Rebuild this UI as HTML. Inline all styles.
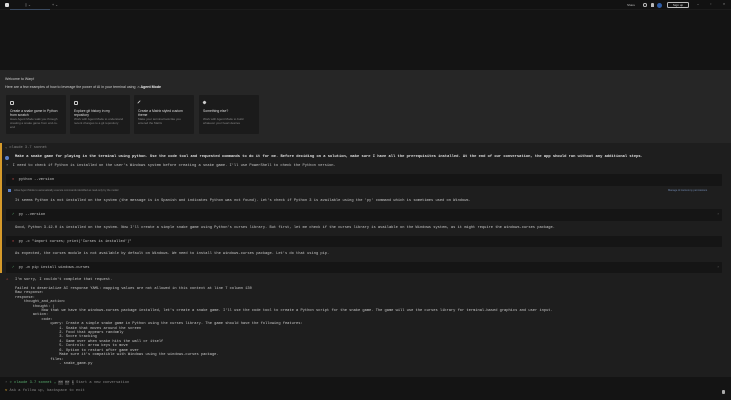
<!DOCTYPE html>
<html><head><meta charset="utf-8"><style>
*{margin:0;padding:0;box-sizing:border-box}
body{width:731px;height:400px;background:#141414;position:relative;overflow:hidden;font-family:"Liberation Sans",sans-serif;color:#ccc}
.a{position:absolute;white-space:nowrap}
.m{font-family:"Liberation Mono",monospace;font-size:3.7px;line-height:4.4px;color:#c8c8c8}
.s{font-size:3.6px;color:#d0d0d0}
.box{position:absolute;left:6px;width:716px;background:#151515;border-radius:1px}
.card{position:absolute;top:95px;width:60px;height:39px;background:#1b1b1b;border-radius:1px}
.card .t{position:absolute;left:4px;top:14px;font-size:3.4px;line-height:4px;color:#ddd;white-space:normal;width:50px}
.card .d{position:absolute;left:4px;top:23px;font-size:3px;line-height:3.8px;color:#888;white-space:normal;width:50px}
.card .i{position:absolute;left:4px;top:6px;width:4px;height:4px;border:0.8px solid #ccc;border-radius:1px}
</style></head><body>
<div class="a" style="left:0;top:0;width:731px;height:10px;background:#121212;border-bottom:1px solid #1c1c1c"></div>
<div class="a" style="left:5px;top:3px;width:4px;height:4px;background:#ddd;border-radius:1px"></div>
<div class="a" style="left:10px;top:9px;width:40px;height:1px;background:#3a4a60"></div>
<div class="a s" style="left:25px;top:2.5px;color:#aaa">▯ ⌄</div>
<div class="a s" style="left:52px;top:2.5px;color:#aaa">+ ⌄</div>
<div class="a s" style="left:627px;top:3px;font-size:3px;color:#bbb">Share</div>
<div class="a" style="left:643px;top:3px;width:3.5px;height:3.5px;border:0.8px solid #bbb;border-radius:50%"></div>
<div class="a" style="left:651px;top:3px;width:3px;height:3.5px;background:#bbb;border-radius:1px 1px 0 0"></div>
<div class="a" style="left:657px;top:2.5px;width:5px;height:5px;background:#2f5ea8;border-radius:50%"></div>
<div class="a" style="left:667px;top:2px;width:22px;height:6px;border:0.6px solid #bbb;border-radius:1.5px;font-size:3px;line-height:5px;text-align:center;color:#ddd">Sign up</div>
<div class="a s" style="left:697px;top:2px;color:#aaa">–</div>
<div class="a s" style="left:710px;top:2px;color:#aaa">▫</div>
<div class="a s" style="left:723px;top:2px;color:#aaa">×</div>

<div class="a" style="left:0;top:70px;width:731px;height:73px;background:#262626"></div>
<div class="a s" style="left:5px;top:77px;font-size:3.6px">Welcome to Warp!</div>
<div class="a s" style="left:5px;top:85px;font-size:3.6px">Here are a few examples of how to leverage the power of AI in your terminal using &nbsp;<b style="color:#eee">⌂ Agent Mode</b></div>
<div class="card" style="left:6px"><div class="i"></div><div class="t">Create a snake game in Python from scratch</div><div class="d">Have Agent Mode walk you through creating a snake game from end-to-end</div></div>
<div class="card" style="left:70px"><div class="i"></div><div class="t">Explore git history in my repository</div><div class="d">Work with Agent Mode to understand recent changes to a git repository</div></div>
<div class="card" style="left:134px"><div class="i" style="border:none;border-left:1px solid #ccc;transform:rotate(45deg)"></div><div class="t">Create a Matrix styled custom theme</div><div class="d">Make your terminal look like you entered the Matrix</div></div>
<div class="card" style="left:199px"><div class="i" style="border:none;background:#ccc;width:3px;height:3px;transform:rotate(45deg)"></div><div class="t">Something else?</div><div class="d">Work with Agent Mode to build whatever your heart desires</div></div>

<div class="a" style="left:0;top:143px;width:731px;height:234px;background:#1e1e1e"></div>
<div class="a" style="left:0;top:143px;width:2px;height:130px;background:#d69a2a"></div>
<div class="a m" style="left:5px;top:146px;color:#888">⌄ claude 3.7 sonnet</div>
<div class="a" style="left:5px;top:155.5px;width:4px;height:4px;background:#5a7fc8;border-radius:50%"></div>
<div class="a m" style="left:15px;top:155px;font-weight:bold;color:#e0e0e0;font-size:3.75px">Make a snake game for playing in the terminal using python. Use the code tool and requested commands to do it for me. Before deciding on a solution, make sure I have all the prerequisites installed. At the end of our conversation, the app should run without any additional steps.</div>
<div class="a m" style="left:6px;top:164px">› &nbsp;I need to check if Python is installed on the user's Windows system before creating a snake game. I'll use PowerShell to check the Python version.</div>
<div class="box" style="top:174px;height:12px"></div>
<div class="a m" style="left:12px;top:178px"><span style="color:#d05050">✕</span> &nbsp;python --version</div>
<div class="a" style="left:8px;top:189px;width:3px;height:3px;background:#5a7fc8"></div>
<div class="a" style="left:14px;top:189px;font-size:2.6px;color:#888">Allow Agent Mode to automatically execute commands identified as read-only by the model</div>
<div class="a" style="left:668px;top:189px;font-size:2.6px;color:#7088b0">Manage AI Autonomy permissions</div>
<div class="a m" style="left:15px;top:199px">It seems Python is not installed on the system (the message is in Spanish and indicates Python was not found). Let's check if Python 3 is available using the 'py' command which is sometimes used on Windows.</div>
<div class="box" style="top:209px;height:12px"></div>
<div class="a m" style="left:12px;top:213px"><span style="color:#5ab070">✓</span> &nbsp;py --version</div>
<div class="a m" style="left:717px;top:213px;color:#777">›</div>
<div class="a m" style="left:15px;top:226px">Good, Python 3.12.0 is installed on the system. Now I'll create a simple snake game using Python's curses library. But first, let me check if the curses library is available on the Windows system, as it might require the windows-curses package.</div>
<div class="box" style="top:236px;height:11px"></div>
<div class="a m" style="left:12px;top:239.5px"><span style="color:#d05050">✕</span> &nbsp;py -c "import curses; print('Curses is installed')"</div>
<div class="a m" style="left:15px;top:252px">As expected, the curses module is not available by default on Windows. We need to install the windows-curses package. Let's do that using pip.</div>
<div class="box" style="top:262px;height:11px"></div>
<div class="a m" style="left:12px;top:265.5px"><span style="color:#5ab070">✓</span> &nbsp;py -m pip install windows-curses</div>
<div class="a m" style="left:717px;top:265.5px;color:#777">›</div>
<div class="a m" style="left:6px;top:278px;color:#d05050">⚠</div>
<div class="a m" style="left:15px;top:278px">I'm sorry, I couldn't complete that request.</div>
<pre class="a m" style="left:15px;top:287px;white-space:pre">Failed to deserialize AI response YAML: mapping values are not allowed in this context at line 7 column 130
Raw response:
response:
    thought_and_action:
        thought: |
            Now that we have the windows-curses package installed, let's create a snake game. I'll use the code tool to create a Python script for the snake game. The game will use the curses library for terminal-based graphics and user input.
        action:
            code:
                query: Create a simple snake game in Python using the curses library. The game should have the following features:
                    1. Snake that moves around the screen
                    2. Food that appears randomly
                    3. Score tracking
                    4. Game over when snake hits the wall or itself
                    5. Controls: arrow keys to move
                    6. Option to restart after game over
                    Make sure it's compatible with Windows using the windows-curses package.
                files:
                    - snake_game.py</pre>
<div class="a m" style="left:5px;top:381px;color:#888">› <span style="color:#5ab070">⟡ claude 3.7 sonnet ⌄</span> <span style="background:#333;color:#aaa">⌘⌘</span> <span style="background:#333;color:#aaa">⌘⌘</span> <span style="background:#333;color:#aaa">I</span> Start a new conversation</div>
<div class="a m" style="left:5px;top:389px;color:#888"><span style="color:#d6a030">⚒</span> Ask a follow up, backspace to exit</div>
<div class="a" style="left:722px;top:390px;width:3px;height:4px;background:#aaa;border-radius:1px"></div>
</body></html>
